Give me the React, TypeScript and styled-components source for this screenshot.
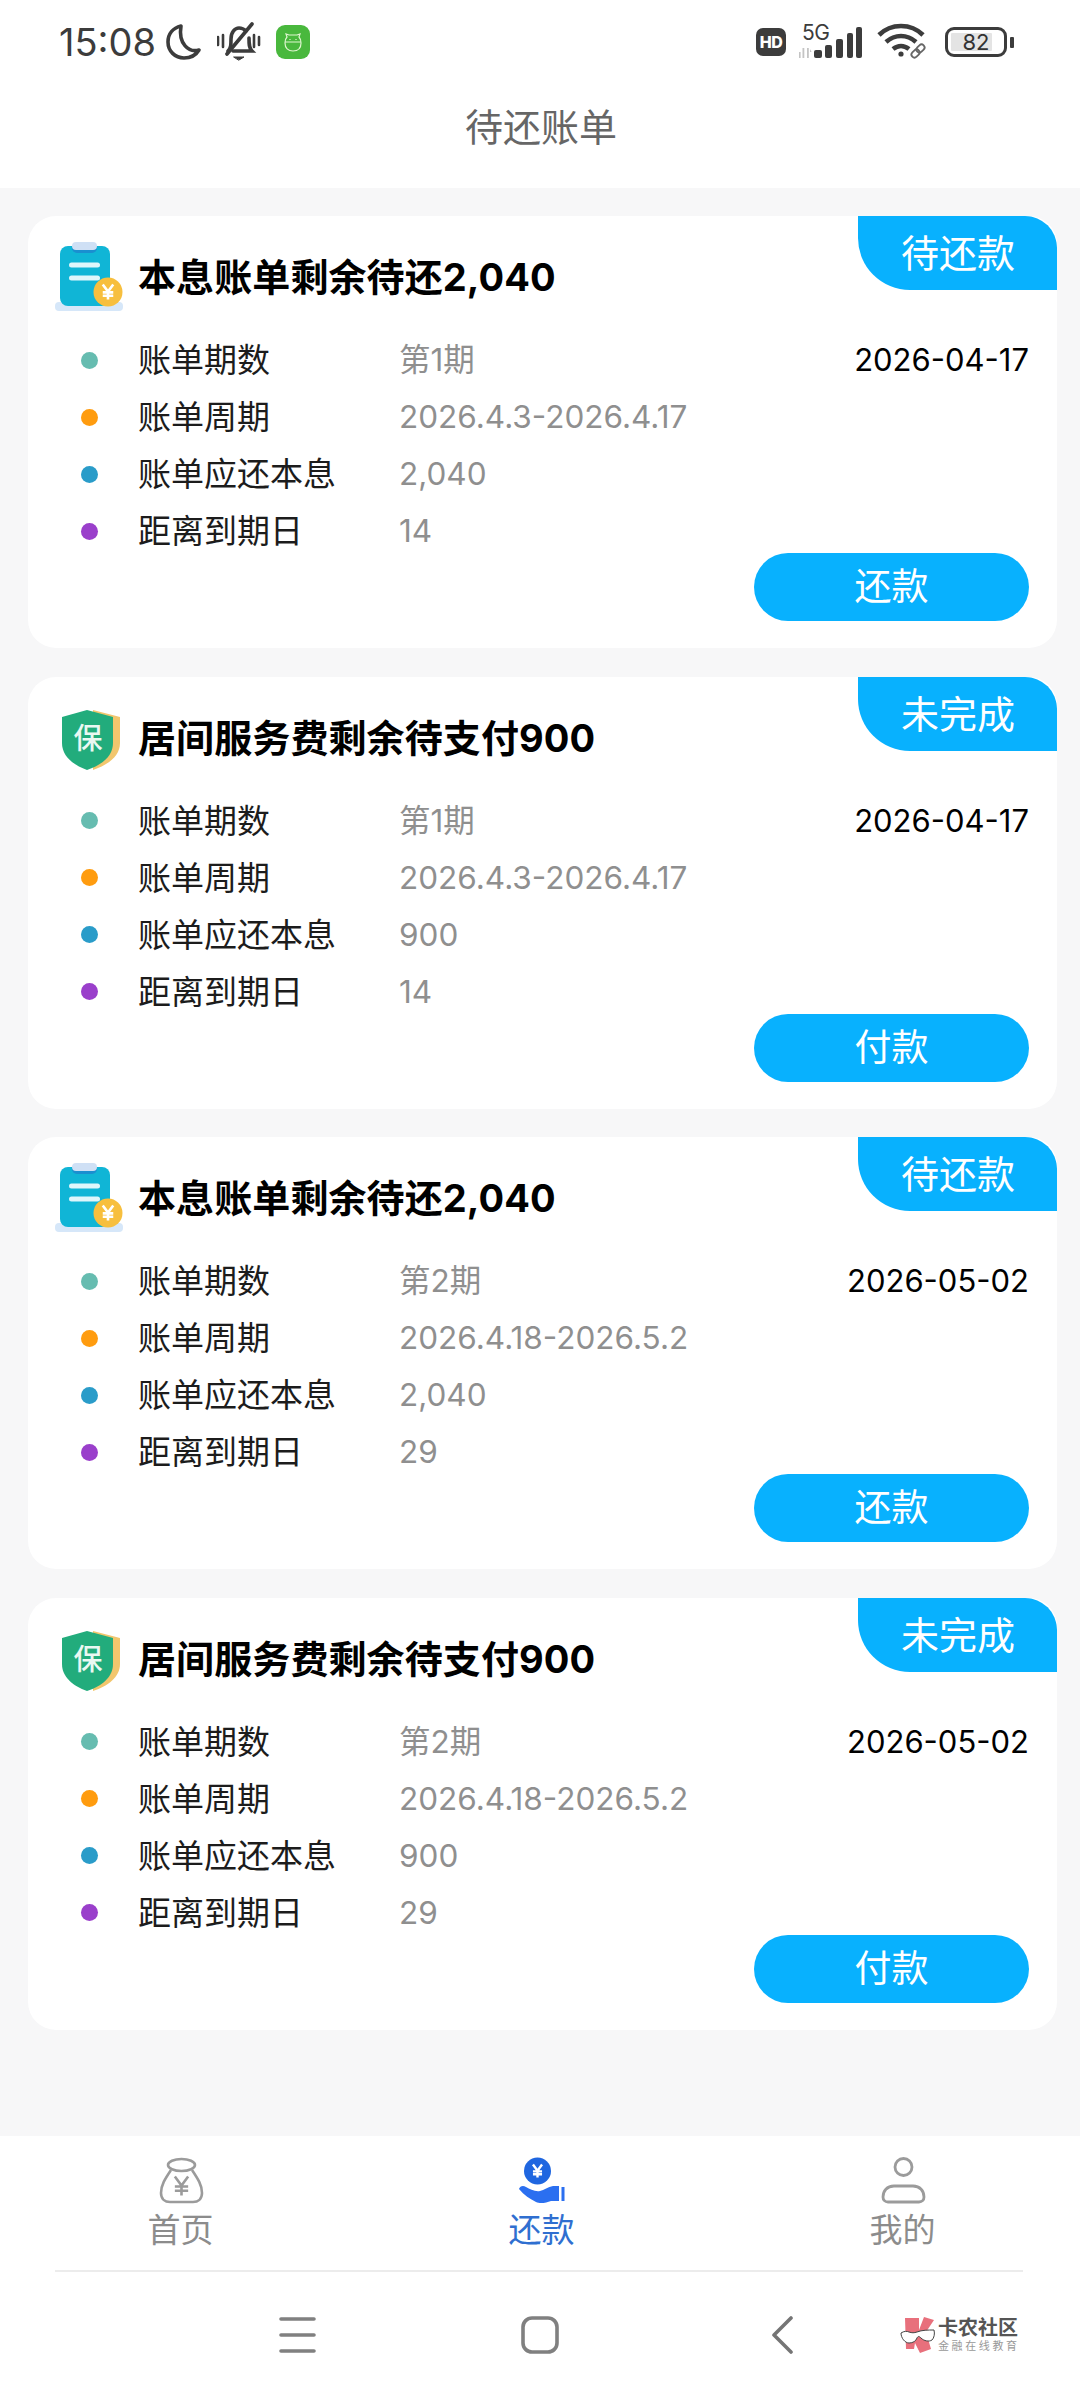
import React from "react";
import styled, { createGlobalStyle } from "styled-components";

const FONT = `Inter, "Noto Sans CJK SC", sans-serif`;
const CJK = `"Noto Sans CJK SC", sans-serif`;

const Global = createGlobalStyle`
  html, body { margin: 0; padding: 0; background: #f7f7f8; }
  * { box-sizing: border-box; }
  body { font-family: ${FONT}; }
`;

const Page = styled.div`
  width: 1080px;
  height: 2400px;
  display: flex;
  flex-direction: column;
  background: #f7f7f8;
  overflow: hidden;
`;

const Top = styled.header`
  height: 188px;
  background: #fff;
  display: flex;
  flex-direction: column;
`;

const StatusBar = styled.div`
  height: 84px;
  padding: 0 66px 0 59px;
  display: flex;
  align-items: center;
  justify-content: space-between;
`;

const StatusGroup = styled.div<{ $gap: number }>`
  display: flex;
  align-items: center;
  gap: ${(p) => p.$gap}px;
`;

const Clock = styled.span`
  font-size: 38px;
  line-height: 44px;
  color: #3c3c3c;
  margin-right: 1px;
`;

const AppBadge = styled.span`
  width: 34px;
  height: 34px;
  border-radius: 9px;
  background: #49b83d;
  display: flex;
  align-items: center;
  justify-content: center;
  margin-left: 6px;
`;

const HdBadge = styled.span`
  width: 30px;
  height: 28px;
  border-radius: 7px;
  background: #3c3c3c;
  color: #fff;
  font-size: 16px;
  font-weight: 800;
  letter-spacing: -0.5px;
  display: flex;
  align-items: center;
  justify-content: center;
`;

const SignalWrap = styled.span`
  position: relative;
  width: 65px;
  height: 40px;
  display: block;
`;

const FiveG = styled.span`
  position: absolute;
  left: 3px;
  top: -1px;
  font-size: 21px;
  line-height: 24px;
  letter-spacing: -0.5px;
  color: #3c3c3c;
`;

const BatteryRow = styled.span`
  display: flex;
  align-items: center;
  gap: 3px;
  margin-left: 3px;
`;

const BatteryShell = styled.span`
  width: 62px;
  height: 30px;
  border: 3px solid #3c3c3c;
  border-radius: 9px;
  padding: 3px;
  display: flex;
  position: relative;
`;

const BatteryFill = styled.span`
  width: 82%;
  height: 100%;
  background: #e4e4e4;
  border-radius: 1px;
`;

const BatteryText = styled.span`
  position: absolute;
  left: 0;
  right: 0;
  top: 0;
  bottom: 0;
  text-align: center;
  font-size: 22px;
  line-height: 24px;
  color: #333;
`;

const BatteryNub = styled.span`
  width: 4px;
  height: 11px;
  border-radius: 1px;
  background: #3c3c3c;
`;

const NavTitle = styled.h1`
  margin: 13px 0 0;
  padding-left: 2px;
  height: 60px;
  text-align: center;
  font-size: 38px;
  line-height: 60px;
  font-weight: 400;
  color: #666;
`;

const List = styled.main`
  padding: 28px 23px 0 28px;
  display: flex;
  flex-direction: column;
  gap: 28.6px;
`;

const Card = styled.section`
  position: relative;
  height: 432px;
  background: #fff;
  border-radius: 28px;
  padding: 26px 28px 0 25px;
  overflow: hidden;
`;

const Tag = styled.div`
  position: absolute;
  top: 0;
  right: 0;
  width: 199px;
  height: 74px;
  padding-left: 43px;
  background: #08b1fe;
  color: #fff;
  font-size: 38px;
  line-height: 74px;
  border-radius: 0 32px 0 52px;
`;

const CardHead = styled.div`
  display: flex;
  align-items: center;
  height: 70px;
  gap: 15px;
`;

const IconBox = styled.span`
  width: 70px;
  height: 70px;
  display: block;
  flex: none;
`;

const CardTitle = styled.h2`
  margin: 0;
  font-size: 38px;
  line-height: 48px;
  font-weight: 700;
  letter-spacing: 0.1px;
  color: #000;
`;

const Rows = styled.div`
  margin-top: 28px;
  padding-left: 28px;
  display: flex;
  flex-direction: column;
  gap: 17px;
`;

const Row = styled.div`
  height: 40px;
  display: flex;
  align-items: center;
`;

const Dot = styled.span<{ $c: string }>`
  width: 17px;
  height: 17px;
  border-radius: 50%;
  background: ${(p) => p.$c};
  margin-right: 40px;
  flex: none;
`;

const Label = styled.span`
  width: 261px;
  padding-bottom: 3px;
  font-family: ${CJK};
  font-size: 33px;
  line-height: 37px;
  color: #1c1c1c;
  flex: none;
`;

const Value = styled.span`
  font-size: 31.5px;
  line-height: 40px;
  color: #8f8f8f;
`;

const DateText = styled.span`
  margin-left: auto;
  font-size: 31px;
  line-height: 40px;
  color: #000;
`;

const ActionRow = styled.div`
  display: flex;
  justify-content: flex-end;
  margin-top: 2px;
`;

const PayButton = styled.button`
  width: 275px;
  height: 68px;
  border: 0;
  border-radius: 34px;
  background: #08b1fe;
  color: #fff;
  font-family: ${CJK};
  font-size: 37px;
  line-height: 62px;
  padding: 0 0 6px;
`;

const TabBar = styled.footer`
  margin-top: auto;
  height: 264px;
  background: #fff;
  display: flex;
  flex-direction: column;
`;

const Tabs = styled.nav`
  height: 134px;
  padding-top: 20px;
  display: grid;
  grid-template-columns: repeat(3, 361px);
`;

const Tab = styled.div<{ $active?: boolean }>`
  display: flex;
  flex-direction: column;
  align-items: center;
  font-size: 33px;
  line-height: 46px;
  color: ${(p) => (p.$active ? "#2f6fd0" : "#8c8c8c")};
`;

const TabIcon = styled.span`
  width: 50px;
  height: 50px;
  display: block;
  margin-bottom: 1px;
`;

const Divider = styled.hr`
  margin: 0 57px 0 55px;
  border: 0;
  height: 2px;
  background: #ececec;
`;

const SystemNav = styled.div`
  flex: 1;
  display: flex;
  align-items: center;
  padding-bottom: 2px;
`;

const SysSlot = styled.span<{ $left: number }>`
  display: flex;
  margin-left: ${(p) => p.$left}px;
`;

const Mark = styled.span`
  display: flex;
  align-items: center;
  margin-left: 107px;
  gap: 2px;
`;

const MarkText = styled.span`
  display: flex;
  flex-direction: column;
  width: 80px;
`;

const MarkMain = styled.span`
  font-size: 20px;
  line-height: 21px;
  font-weight: 700;
  color: #555;
  white-space: nowrap;
`;

const MarkSub = styled.span`
  font-size: 11px;
  line-height: 14px;
  color: #999;
  letter-spacing: 2.6px;
  white-space: nowrap;
`;

const Yen = ({ x, y, s, c = "#fff", w = 2 }: { x: number; y: number; s: number; c?: string; w?: number }) => (
  <path
    d={`M${x - s * 0.7} ${y - s}L${x} ${y - s * 0.05}L${x + s * 0.7} ${y - s}M${x} ${y - s * 0.05}V${y + s}M${x - s * 0.7} ${y + s * 0.05}H${x + s * 0.7}M${x - s * 0.7} ${y + s * 0.5}H${x + s * 0.7}`}
    fill="none"
    stroke={c}
    strokeWidth={w}
  />
);

const BillIcon = () => (
  <svg width="70" height="70" viewBox="0 0 70 70">
    <rect x="2" y="60" width="68" height="9" rx="4" fill="#d6e7f9" />
    <rect x="7" y="4" width="50" height="60" rx="8" fill="#10b5d6" />
    <path d="M19 4h25v2a5 5 0 0 1-5 5H24a5 5 0 0 1-5-5z" fill="#1a8fd0" />
    <rect x="19" y="0" width="25" height="8" rx="4" fill="#cfe0f5" />
    <rect x="16" y="20.5" width="31" height="5" rx="2.5" fill="#dff6fb" />
    <rect x="16" y="33.5" width="31" height="5" rx="2.5" fill="#dff6fb" />
    <circle cx="55" cy="50" r="14.5" fill="#f7bf3e" />
    <Yen x={55} y={50} s={7.5} w={2.6} />
  </svg>
);

const ShieldIcon = () => (
  <svg width="70" height="70" viewBox="0 0 70 70">
    <path d="M40 7 67 14v26c0 13-12 22-27 27z" fill="#f2c66d" />
    <path d="M34 7 60 14v26c0 13-11 22-26 27C20 62 9 53 9 40V14z" fill="#22ac7c" />
    <text x="35" y="46" textAnchor="middle" fontSize="29" fontWeight="500" fill="#eaf8f2" fontFamily={CJK}>保</text>
  </svg>
);

const BagIcon = () => (
  <svg width="50" height="50" viewBox="0 0 50 50" fill="none" stroke="#9b9b9b" strokeWidth="2.6">
    <ellipse cx="25.5" cy="9" rx="13.500" ry="6" />
    <path d="M15 14C9 23 5 29 5 37c0 6 4 9 9 9h23c5 0 9-3 9-9 0-8-4-14-10-23" />
    <Yen x={25.5} y={30} s={9.5} c="#9b9b9b" w={2.6} />
  </svg>
);

const HandIcon = () => (
  <svg width="50" height="50" viewBox="0 0 50 50">
    <circle cx="20.5" cy="15" r="13.500" fill="#1f66e0" />
    <Yen x={20.5} y={15} s={6.5} w={2.4} />
    <path d="M2 33c1-3 4-4 7-2 4 2 9 5 14 4 4-1 8-4 13-5h6v15h-8c-5 2-11 3-15 1-6-3-12-7-17-13z" fill="#2b6ff0" />
    <rect x="44.5" y="31" width="3" height="14" fill="#2b6ff0" />
  </svg>
);

const PersonIcon = () => (
  <svg width="50" height="50" viewBox="0 0 50 50" fill="none" stroke="#9b9b9b" strokeWidth="2.8">
    <circle cx="25.5" cy="11" r="8.500" />
    <path d="M16 30h19c7 0 11 5 11 11 0 3-2 5-5 5H10c-3 0-5-2-5-5 0-6 4-11 11-11z" />
  </svg>
);

const BILL = { title: "本息账单剩余待还2,040", tag: "待还款", action: "还款", amount: "2,040", Icon: BillIcon };
const FEE = { title: "居间服务费剩余待支付900", tag: "未完成", action: "付款", amount: "900", Icon: ShieldIcon };

const cards = [
  { ...BILL, period: "第1期", cycle: "2026.4.3-2026.4.17", days: "14", date: "2026-04-17" },
  { ...FEE, period: "第1期", cycle: "2026.4.3-2026.4.17", days: "14", date: "2026-04-17" },
  { ...BILL, period: "第2期", cycle: "2026.4.18-2026.5.2", days: "29", date: "2026-05-02" },
  { ...FEE, period: "第2期", cycle: "2026.4.18-2026.5.2", days: "29", date: "2026-05-02" },
];

export default function App() {
  return (
    <Page>
      <Global />
      <Top>
        <StatusBar>
          <StatusGroup $gap={9}>
            <Clock>15:08</Clock>
            <svg width="36" height="38" viewBox="0 0 36 38" fill="none" stroke="#3c3c3c" strokeWidth="3.6">
              <path d="M15 3C7 5 2 11 2 19c0 9 7 16 16 16 7 0 12-3 15-8-10 3-21-6-18-24z" strokeLinejoin="round" />
            </svg>
            <svg width="44" height="40" viewBox="0 0 44 40" fill="none" stroke="#3c3c3c" strokeWidth="3.6" strokeLinecap="round" style={{ marginLeft: 6 }}>
              <path d="M1 15v8M6 13v12M37 13v12M42 15v8" strokeWidth="2.6" />
              <path d="M11 29c3-3 3-6 3-12 0-7 4-11 8-11 3 0 5 1 7 3M32 16c0 6 0 10 3 13H16" />
              <path d="M10 32 35 2" />
              <path d="M17 35h10l-5 3z" fill="#3c3c3c" strokeWidth="1" />
            </svg>
            <AppBadge>
              <svg width="18" height="20" viewBox="0 0 18 20" fill="none" stroke="#dff5cf" strokeWidth="1.2">
                <path d="M3 5 2 2l3 1h8l3-1-1 3c2 2 2 4 2 6 0 5-3 8-8 8s-8-3-8-8c0-2 0-4 2-6zM1 10h16" />
                <path d="M6 7v1M12 7v1" />
              </svg>
            </AppBadge>
          </StatusGroup>
          <StatusGroup $gap={13}>
            <HdBadge>HD</HdBadge>
            <SignalWrap>
              <FiveG>5G</FiveG>
              <svg width="65" height="40" viewBox="0 0 65 40">
                <path d="M0 30h1.600v6H0zM3.500 26h1.800v10H3.500zM8 26h1.800v10H8zM11 30h1.600l-1.600-3z" fill="#c4c4c4" />
                <rect x="15" y="28" width="8" height="8" rx="2" fill="#3c3c3c" />
                <rect x="26" y="23" width="7" height="13" rx="2" fill="#3c3c3c" />
                <rect x="37" y="17" width="7" height="19" rx="2" fill="#3c3c3c" />
                <rect x="48" y="11" width="6" height="25" rx="2" fill="#3c3c3c" />
                <rect x="57" y="5" width="6" height="31" rx="2" fill="#3c3c3c" />
              </svg>
            </SignalWrap>
            <svg width="52" height="38" viewBox="0 0 52 38" fill="none" stroke="#3c3c3c" strokeWidth="4.600">
              <path d="M2 12C14 0 34 0 46 12" />
              <path d="M9 19C18 11 30 11 39 19" />
              <path d="M16 26c5-4 11-4 16 0" />
              <circle cx="24" cy="31" r="2.600" fill="#3c3c3c" stroke="none" />
              <g transform="rotate(-45 41 28)" stroke="#666" strokeWidth="1.800">
                <rect x="33" y="25" width="9" height="6" rx="3" fill="#fff" />
                <rect x="40" y="25" width="9" height="6" rx="3" />
              </g>
            </svg>
            <BatteryRow>
              <BatteryShell>
                <BatteryFill />
                <BatteryText>82</BatteryText>
              </BatteryShell>
              <BatteryNub />
            </BatteryRow>
          </StatusGroup>
        </StatusBar>
        <NavTitle>待还账单</NavTitle>
      </Top>

      <List>
        {cards.map((c, i) => (
          <Card key={i}>
            <Tag>{c.tag}</Tag>
            <CardHead>
              <IconBox>
                <c.Icon />
              </IconBox>
              <CardTitle>{c.title}</CardTitle>
            </CardHead>
            <Rows>
              <Row>
                <Dot $c="#66bcb0" />
                <Label>账单期数</Label>
                <Value>{c.period}</Value>
                <DateText>{c.date}</DateText>
              </Row>
              <Row>
                <Dot $c="#ff9c0f" />
                <Label>账单周期</Label>
                <Value>{c.cycle}</Value>
              </Row>
              <Row>
                <Dot $c="#2a9cc9" />
                <Label>账单应还本息</Label>
                <Value>{c.amount}</Value>
              </Row>
              <Row>
                <Dot $c="#9a3fcb" />
                <Label>距离到期日</Label>
                <Value>{c.days}</Value>
              </Row>
            </Rows>
            <ActionRow>
              <PayButton>{c.action}</PayButton>
            </ActionRow>
          </Card>
        ))}
      </List>

      <TabBar>
        <Tabs>
          <Tab>
            <TabIcon><BagIcon /></TabIcon>
            首页
          </Tab>
          <Tab $active>
            <TabIcon><HandIcon /></TabIcon>
            还款
          </Tab>
          <Tab>
            <TabIcon><PersonIcon /></TabIcon>
            我的
          </Tab>
        </Tabs>
        <Divider />
        <SystemNav>
          <SysSlot $left={279}>
            <svg width="37" height="36" viewBox="0 0 37 36" stroke="#808080" strokeWidth="3.600" strokeLinecap="round">
              <path d="M2 2h33M2 18h33M2 34h33" />
            </svg>
          </SysSlot>
          <SysSlot $left={205}>
            <svg width="38" height="38" viewBox="0 0 38 38" fill="none" stroke="#808080" strokeWidth="3.600">
              <rect x="2" y="2" width="34" height="34" rx="9" />
            </svg>
          </SysSlot>
          <SysSlot $left={213}>
            <svg width="21" height="38" viewBox="0 0 21 38" fill="none" stroke="#757575" strokeWidth="3.600" strokeLinecap="round" strokeLinejoin="round">
              <path d="M19 2 2 19l17 17" />
            </svg>
          </SysSlot>
          <Mark>
            <svg width="36" height="36" viewBox="0 0 36 36">
              <path d="M5 1h14v12L24 0l10 3-8 12 5 17-11 4-5-10-1 6H6z" fill="#e8707c" />
              <path d="M1 16c3-2 6-2 8-1 3 1 5 1 8 0 5-2 11-2 17-2 1 4 0 8-2 10-3 2-8 1-11-2-2-2-3-2-4 0-1 3-4 5-8 5S1 21 1 16z" fill="#fff" stroke="#444" strokeWidth="1" />
            </svg>
            <MarkText>
              <MarkMain>卡农社区</MarkMain>
              <MarkSub>金融在线教育</MarkSub>
            </MarkText>
          </Mark>
        </SystemNav>
      </TabBar>
    </Page>
  );
}
